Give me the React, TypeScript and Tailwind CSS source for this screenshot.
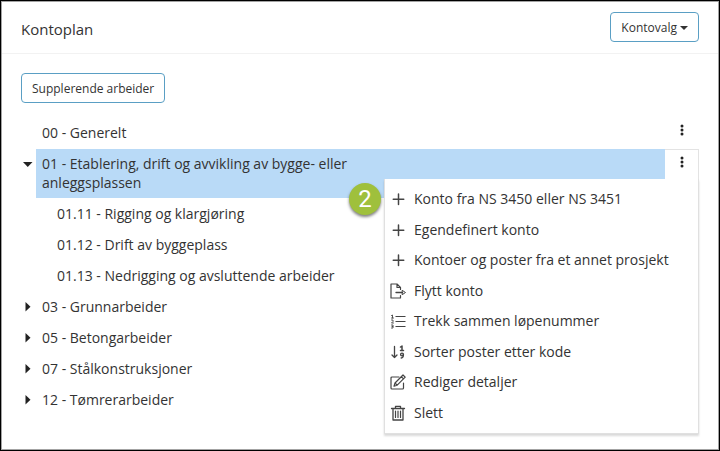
import type { ReactNode } from "react";

interface Account {
  label: string;
  level: number;
  state?: "open" | "closed";
}

const CHILDREN: Account[] = [
  { label: "01.11 - Rigging og klargjøring", level: 1 },
  { label: "01.12 - Drift av byggeplass", level: 1 },
  { label: "01.13 - Nedrigging og avsluttende arbeider", level: 1 },
  { label: "03 - Grunnarbeider", level: 0, state: "closed" },
  { label: "05 - Betongarbeider", level: 0, state: "closed" },
  { label: "07 - Stålkonstruksjoner", level: 0, state: "closed" },
  { label: "12 - Tømrerarbeider", level: 0, state: "closed" },
];

const MENU: { label: string; icon: ReactNode }[] = [
  { label: "Konto fra NS 3450 eller NS 3451", icon: <PlusIcon /> },
  { label: "Egendefinert konto", icon: <PlusIcon /> },
  { label: "Kontoer og poster fra et annet prosjekt", icon: <PlusIcon /> },
  { label: "Flytt konto", icon: <MoveIcon /> },
  { label: "Trekk sammen løpenummer", icon: <NumberedIcon /> },
  { label: "Sorter poster etter kode", icon: <SortIcon /> },
  { label: "Rediger detaljer", icon: <EditIcon /> },
  { label: "Slett", icon: <TrashIcon /> },
];

export default function App() {
  return (
    <div className="flex min-h-screen flex-col border border-black bg-white font-['Open_Sans',sans-serif] text-sm text-[#333]">
      <div className="flex-1 border border-[#a3a3a3]">
        <header className="flex items-start justify-between border-b border-[#f2f2f2] px-[19px] pt-[10px] pb-[7px]">
          <h1 className="text-[15px] leading-[34px]">Kontoplan</h1>
          <OutlineButton>
            Kontovalg
            <svg className="ml-[3px] h-1 w-2" viewBox="0 0 8 4" fill="currentColor" aria-hidden="true">
              <path d="M0 0h8L4 4z" />
            </svg>
          </OutlineButton>
        </header>

        <main className="px-[19px] pt-[19px]">
          <OutlineButton>Supplerende arbeider</OutlineButton>

          <ul className="pt-[15px]">
            {/* Account without children */}
            <li className="flex h-[31px] items-start">
              <span className="flex h-[30px] flex-1 items-center pl-[21px]">00 - Generelt</span>
              <KebabButton label="Meny for 00 - Generelt" />
            </li>

            {/* Selected account with its menu open */}
            <li className="relative flex">
              <button type="button" aria-label="Lukk 01" className="flex h-[30px] w-[15px] items-center">
                <Caret open />
              </button>
              <div className="flex-1 bg-[#b9daf7] px-[6px] pt-[5px] pb-[6px]">
                <p className="max-w-[330px] leading-[19px]">
                  01 - Etablering, drift og avvikling av bygge- eller anleggsplassen
                </p>
              </div>
              <div className="w-[34px] border-t border-r border-[#e3e3e3]">
                <KebabButton label="Meny for 01" />
              </div>
              <ContextMenu />
            </li>

            {CHILDREN.map((a) => (
              <li key={a.label} className="flex h-[31px] items-center">
                <span className="w-[21px]">
                  {a.state === "closed" && (
                    <button type="button" aria-label={`Åpne ${a.label}`} className="block">
                      <Caret />
                    </button>
                  )}
                </span>
                <span className={a.level === 1 ? "pl-[15px]" : ""}>{a.label}</span>
              </li>
            ))}
          </ul>
        </main>
      </div>
    </div>
  );
}

function OutlineButton({ children }: { children: ReactNode }) {
  return (
    <button
      type="button"
      className="flex h-[30px] items-center rounded border border-[#5a9fc4] bg-white px-[10px] pt-px text-xs"
    >
      {children}
    </button>
  );
}

function KebabButton({ label }: { label: string }) {
  return (
    <button type="button" aria-label={label} className="flex h-6 w-[34px] items-center justify-center">
      <svg className="h-3 w-1" viewBox="0 0 4 12" fill="#222" aria-hidden="true">
        <circle cx="2" cy="2" r="1.5" />
        <circle cx="2" cy="6" r="1.5" />
        <circle cx="2" cy="10" r="1.5" />
      </svg>
    </button>
  );
}

function Caret({ open = false }: { open?: boolean }) {
  return (
    <svg className="size-[13px]" viewBox="0 0 13 13" fill="#222" aria-hidden="true">
      <path d={open ? "M2 4h9.5l-4.75 5z" : "M4.5 2v9.5l5-4.75z"} />
    </svg>
  );
}

function ContextMenu() {
  return (
    <div className="absolute top-[30px] right-0 w-[315px] border-r border-b border-l border-[#e0e0e0] bg-white pt-[5px] pb-[5px] shadow-[0_2px_2px_rgba(0,0,0,0.15)]">
      <ul role="menu" className="flex h-[244px] flex-col">
        {MENU.map((item) => (
          <li key={item.label} role="none" className="flex flex-1">
            <button type="button" role="menuitem" className="flex w-full items-center gap-2 pl-[5px] text-left">
              <span className="flex w-4 justify-center">{item.icon}</span>
              {item.label}
            </button>
          </li>
        ))}
      </ul>
      {/* Step marker */}
      <span className="absolute top-1 -left-9 flex size-8 items-center justify-center rounded-full bg-[#9fc03c] font-['Roboto',sans-serif] text-2xl text-white shadow-[0_2px_3px_rgba(0,0,0,0.5)]">
        2
      </span>
    </div>
  );
}

function Icon({ children }: { children: ReactNode }) {
  return (
    <svg
      className="size-4 shrink-0"
      viewBox="0 0 16 16"
      fill="none"
      stroke="#444"
      strokeWidth="1.2"
      strokeLinecap="round"
      strokeLinejoin="round"
      aria-hidden="true"
    >
      {children}
    </svg>
  );
}

function PlusIcon() {
  return (
    <Icon>
      <path d="M8.5 3v10.5M3.25 8.25h10.5" strokeWidth="1.5" />
    </Icon>
  );
}

function MoveIcon() {
  return (
    <Icon>
      <path d="M10.5 6.5v-2L7 1H1v14h9.5v-2.5M7 1v3.500h3.500" />
      <path d="M6 9.500h6.500" strokeWidth="1.3" />
      <path d="M12.500 7.500l3 2-3 2z" strokeWidth="1" />
    </Icon>
  );
}

function NumberedIcon() {
  return (
    <Icon>
      <path d="M5.5 3.5h10M5.5 8.5h10M5.5 13.5h10" strokeLinecap="butt" />
      <path d="M1.5 2.5l1-.5v3M1.5 5h2M1.5 7H3v1.5L1.5 10h2M1.5 12H3v1.5H2M3 13.5V15H1.5" strokeWidth="0.9" />
    </Icon>
  );
}

function SortIcon() {
  return (
    <Icon>
      <path d="M4.5 2.5v11M2 11l2.5 2.5L7 11" strokeWidth="1.3" />
      <path d="M10.5 3L12 2v4.5M10.5 6.5h3" strokeWidth="1.5" />
      <circle cx="12" cy="10.5" r="1.4" strokeWidth="1.4" />
      <path d="M13.4 10.5c0 2-.6 3.3-2.2 3.5" strokeWidth="1.4" />
    </Icon>
  );
}

function EditIcon() {
  return (
    <Icon>
      <path d="M9 3H2a1 1 0 0 0-1 1v10a1 1 0 0 0 1 1h10.5a1 1 0 0 0 1-1V9" />
      <path d="M13 1l2.2 2.2-8 8-3.2 1 1-3.200zM11.3 2.7l2.2 2.2M5 9l2.200 2.200" />
    </Icon>
  );
}

function TrashIcon() {
  return (
    <Icon>
      <path d="M1.5 3.5h13M5.5 3.3v-2h5v2M3 3.5V15h10V3.5" strokeWidth="1.3" />
      <path d="M5.5 6v6.500M8 6v6.500M10.5 6v6.500" />
    </Icon>
  );
}
